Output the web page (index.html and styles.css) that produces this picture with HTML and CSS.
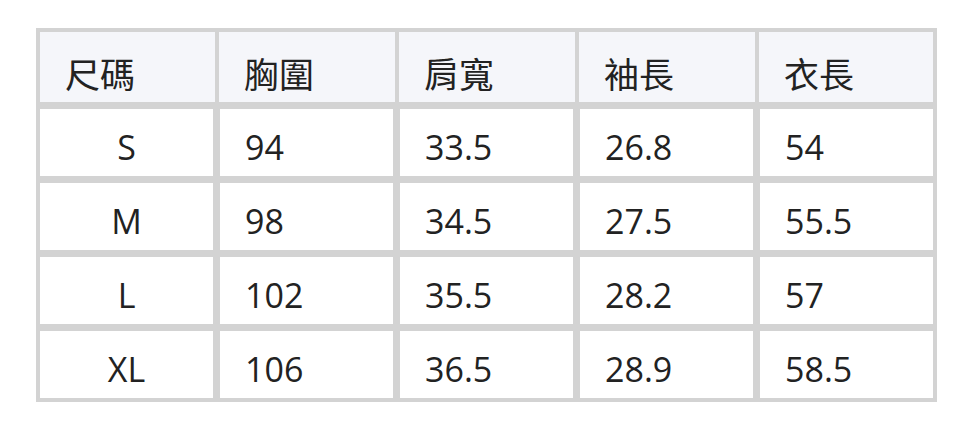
FILE: index.html
```html
<!DOCTYPE html>
<html lang="zh-Hant">
<head>
<meta charset="utf-8">
<link rel="stylesheet" href="styles.css">
</head>
<body>
<div class="size-table">
  <div class="row head">
    <div class="cell">尺碼</div>
    <div class="cell">胸圍</div>
    <div class="cell">肩寬</div>
    <div class="cell">袖長</div>
    <div class="cell">衣長</div>
  </div>
  <div class="row">
    <div class="cell center">S</div>
    <div class="cell">94</div>
    <div class="cell">33.5</div>
    <div class="cell">26.8</div>
    <div class="cell">54</div>
  </div>
  <div class="row">
    <div class="cell center">M</div>
    <div class="cell">98</div>
    <div class="cell">34.5</div>
    <div class="cell">27.5</div>
    <div class="cell">55.5</div>
  </div>
  <div class="row">
    <div class="cell center">L</div>
    <div class="cell">102</div>
    <div class="cell">35.5</div>
    <div class="cell">28.2</div>
    <div class="cell">57</div>
  </div>
  <div class="row">
    <div class="cell center">XL</div>
    <div class="cell">106</div>
    <div class="cell">36.5</div>
    <div class="cell">28.9</div>
    <div class="cell">58.5</div>
  </div>
</div>
</body>
</html>
```

FILE: styles.css
```css
html, body {
  margin: 0;
  padding: 0;
  background: #ffffff;
}
body {
  padding: 28px 36px;
  font-family: "Open Sans", "Noto Sans CJK TC", sans-serif;
  color: #222222;
}
.size-table {
  width: 893px;
  background: #d3d3d3;
  padding: 4px;
  display: flex;
  flex-direction: column;
  gap: 7px;
}
.row {
  display: grid;
  grid-template-columns: repeat(5, 173px);
  column-gap: 7px;
}
.row.head {
  grid-template-columns: 175px 176px 176px 176px 174px;
  column-gap: 4px;
}
.cell {
  background: #ffffff;
  height: 67px;
  box-sizing: border-box;
  padding: 11px 0 0 25px;
  font-size: 34px;
  line-height: 54px;
  white-space: nowrap;
}
.head .cell {
  background: #f5f6fa;
  height: 70px;
  padding-top: 16px;
  font-size: 35px;
}
.cell.center {
  padding-left: 0;
  text-align: center;
}
```
